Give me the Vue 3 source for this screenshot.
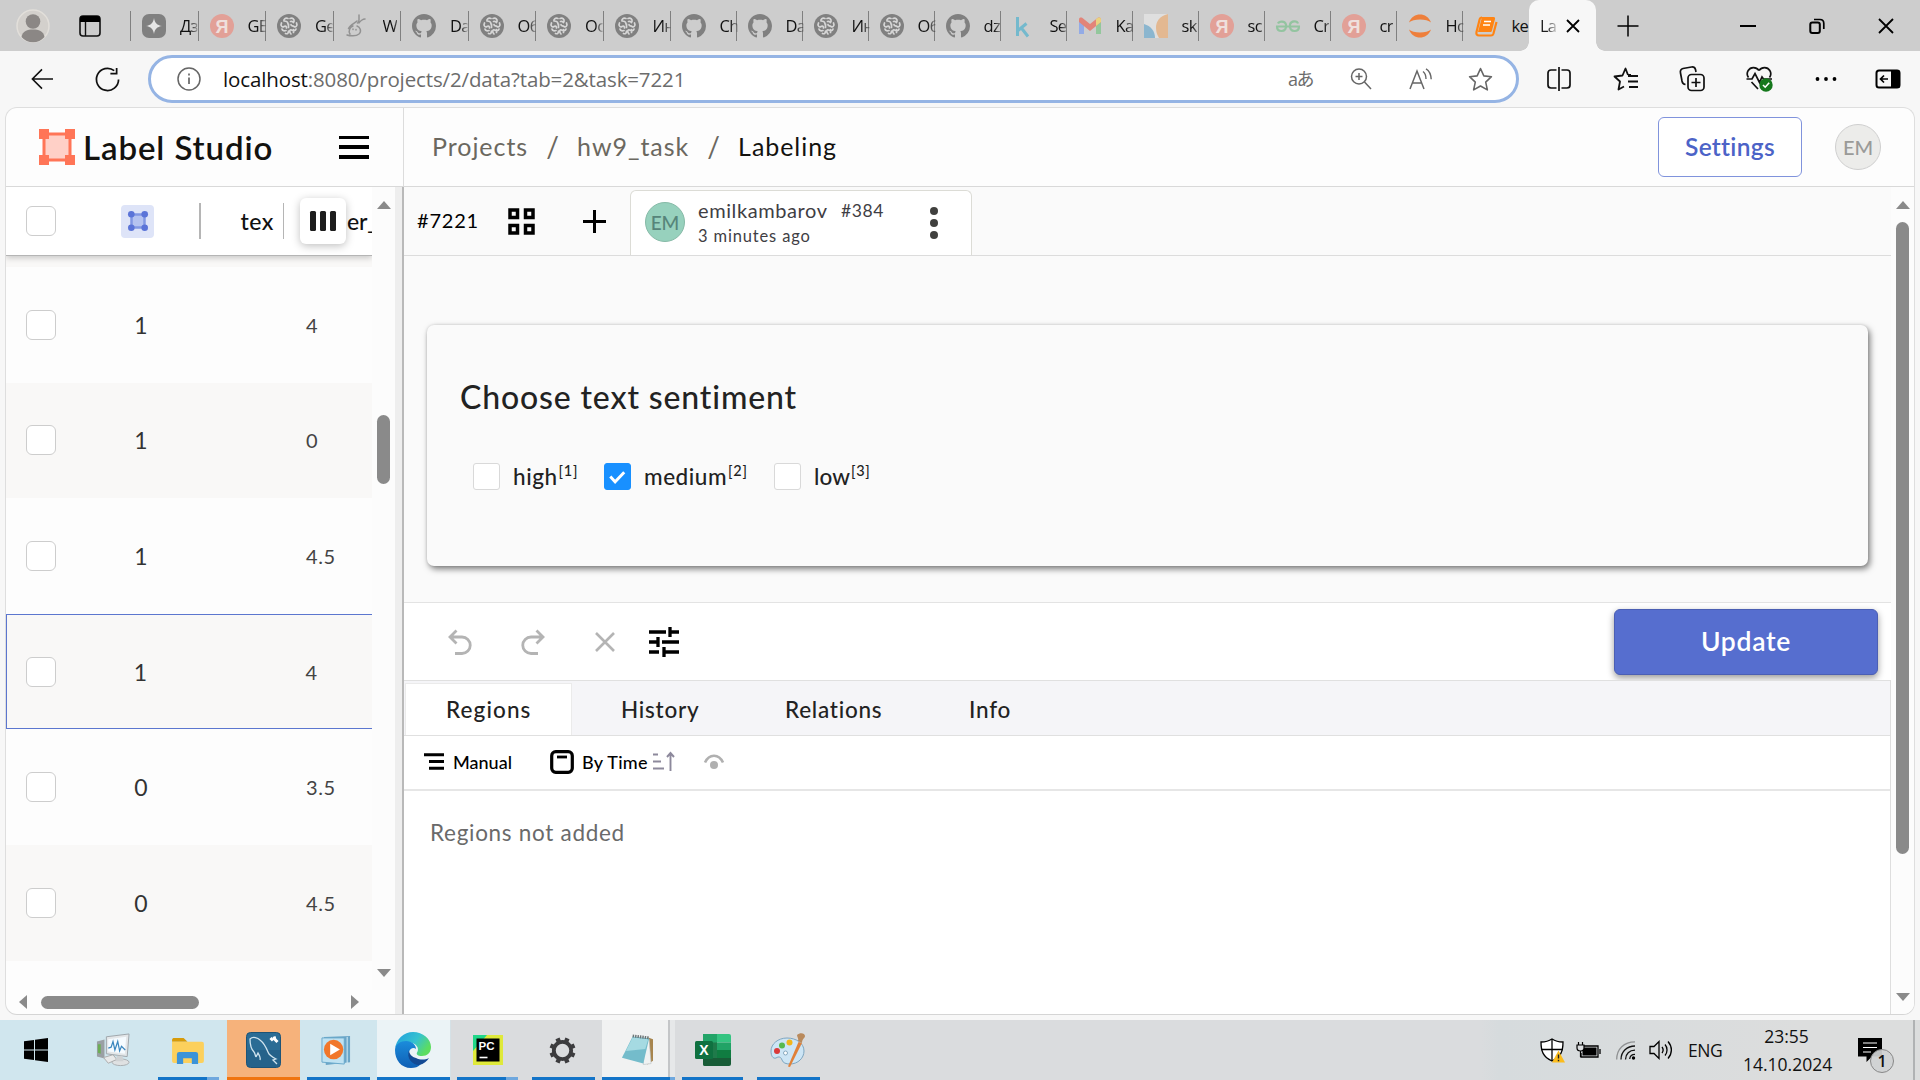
<script setup>
const gpt = '<circle cx="12" cy="12" r="12" fill="#808080"/><g fill="none" stroke="#d6d6d6" stroke-width="1.7" stroke-linecap="round"><path d="M11 4.5c-3-1-4.5 1-4 2.5 2 0 4 .5 4 3M4.5 9c-1.5 3 1 4.5 2.500 3.500 1.500-1 2.500 0 2.500 1.500M5 15c.5 2 2.500 2 4 1.500M8.500 19.500c2 .8 3-.5 3-2.500M11.500 10v3.500"/><path d="M13 4.500c3-1 4.500 1 4 3M19.500 9c1.500 3-1 4.500-2.500 3.500-1.500-1-3 0-3-2M19 15c-.5 2-2.500 2-4.500 1s-2.500 2-.5 4M16.500 15.500v3M13.500 7.500c1.500-.5 2.500 0 3 1"/></g>'
const github = '<path transform="scale(1.5)" fill="#808080" d="M8 0C3.580 0 0 3.580 0 8c0 3.540 2.290 6.530 5.470 7.590.4.07.55-.17.55-.38 0-.19-.01-.82-.01-1.490-2.010.37-2.530-.49-2.690-.94-.09-.23-.48-.94-.82-1.130-.28-.15-.68-.52-.01-.53.63-.01 1.080.58 1.230.82.72 1.210 1.870.87 2.330.66.07-.52.28-.87.51-1.070-1.780-.2-3.640-.89-3.640-3.950 0-.87.31-1.590.82-2.150-.08-.2-.36-1.020.08-2.120 0 0 .67-.21 2.200.82.64-.18 1.320-.27 2-.27.68 0 1.360.09 2 .27 1.530-1.040 2.200-.82 2.200-.82.44 1.100.16 1.920.08 2.120.51.56.82 1.270.82 2.150 0 3.070-1.870 3.750-3.650 3.950.29.25.54.73.54 1.480 0 1.070-.01 1.930-.01 2.200 0 .21.15.46.55.38A8.012 8.012 0 0 0 16 8c0-4.420-3.580-8-8-8z"/>'
const yandex = '<circle cx="12" cy="12" r="12" fill="#e2a097"/><text x="12" y="18.500" text-anchor="middle" font-family="Liberation Sans, sans-serif" font-size="18" font-weight="700" fill="#efe0dd">Я</text>'
const spark = '<rect width="24" height="24" rx="7" fill="#808080"/><path d="M12 4c.8 5 3 7.200 8 8-5 .8-7.200 3-8 8-.8-5-3-7.200-8-8 5-.8 7.200-3 8-8z" fill="#e6e6e6"/>'
const creature = '<g fill="none" stroke="#929292" stroke-width="1.500" stroke-linecap="round"><path d="M12 7c-2 2-7 4-8.500 7.500M14 1v5c0 2-1.500 3-1.500 3M20 5c-2 0-5 2-6 4M2 21c3 1 9 1.500 12-1 3-3 1-7-2-8M5 20c-2-3 0-7 3-8M8 15v.5M11 15.500v.5"/></g>'
const kaggle = '<path d="M5.500 3v19M14.500 9.500l-8.500 7M9 13.500l7 9" fill="none" stroke="#74b9cd" stroke-width="3"/>'
const gmail = '<path d="M1 6v14h5V10z" fill="#93abe6"/><path d="M23 6v14h-5V10z" fill="#93c79c"/><path d="M1 5.500C1 3.500 3 3 4.500 4L12 10l7.500-6c1.500-1 3.500-.5 3.500 1.500V8l-11 9L1 8z" fill="#e28479"/><path d="M18 5.300L19.500 4c1.500-1 3.500-.5 3.500 1.500V8l-5 4z" fill="#ead27f"/>'
const pieces = '<rect width="24" height="24" fill="#dfdfdf"/><path d="M0 10c7 2 11 7 11 14H0z" fill="#8bb6cf"/><path d="M24 0c-9 2-12 8-12 14 0 5 2 8 3 10h9z" fill="#e3b891"/>'
const geeks = '<g fill="none" stroke="#93c4a0" stroke-width="2.200"><path d="M0 12.500h24M2 9.500C3 7 9 6.500 10 10.500c1 4-1.500 6.500-4.500 6.500S1 15 1 12.500M22 9.500C21 6.500 15 6.500 14 10.500c-1 4 1.500 6.500 4.500 6.500s4.500-2 4.500-4.500"/></g>'
const jupyter = '<path d="M1 8.500C3 3 7.500.5 12 .5S21 3 23 8.500C19 4.500 5 4.500 1 8.500zM1 15.500c2 5.500 6.500 8 11 8s9-2.500 11-8c-4 4-18 4-22 0z" fill="#ee7f3b"/>'
const book = '<path d="M8 3h11.500c1.300 0 1.800.8 1.500 2l-3 11.500c-.3 1-.8 1.500-2 1.500H4z" fill="#ff8413"/><path d="M8 3.500C6.500 3.500 6 4 5.600 5.500L2.500 18c-.5 2.500.5 3.500 2.500 3.500h12c1.200 0 2-.5 2.400-1.800L22.500 8" fill="none" stroke="#ff8413" stroke-width="2.200"/><path d="M10 7.500h7M9 11h7" stroke="#fff" stroke-width="1.500"/>'

const tabs = [
  ['Дз', spark], ['GE', yandex], ['Ge', gpt], ['W', creature], ['Da', github], ['Об', gpt], ['Oc', gpt],
  ['Ин', gpt], ['Ch', github], ['Da', github], ['Ин', gpt], ['Об', gpt], ['dz', github], ['Se', kaggle],
  ['Ka', gmail], ['sk', pieces], ['sc', yandex], ['Cr', geeks], ['cr', yandex], ['Ho', jupyter], ['ke', book],
].map(([title, icon]) => ({ title, icon }))

const rows = [
  { total: 1, score: '4' },
  { total: 1, score: '0' },
  { total: 1, score: '4.5' },
  { total: 1, score: '4', selected: true },
  { total: 0, score: '3.5' },
  { total: 0, score: '4.5' },
]

const choices = [
  { name: 'high', hint: '[1]' },
  { name: 'medium', hint: '[2]', checked: true },
  { name: 'low', hint: '[3]' },
]

const panels = ['Regions', 'History', 'Relations', 'Info']
</script>

<template>
  <div class="screen">
    <header class="tabstrip">
      <svg class="profile" viewBox="0 0 34 34"><circle cx="17" cy="17" r="16" fill="#d3d0cc" stroke="#e2dfda" stroke-width="1.500"/><circle cx="17" cy="12.500" r="7.300" fill="#8b8785"/><path d="M5.500 28c1-6 6-7.500 11.500-7.500S27.500 22 28.500 28c-3 3.500-7 5.200-11.500 5.200S8.500 31.500 5.500 28z" fill="#8b8785"/></svg>
      <svg class="workspace" viewBox="0 0 22 22"><rect x="1" y="1" width="20" height="20" rx="3" fill="none" stroke="#111" stroke-width="1.600"/><path d="M1 7V4a3 3 0 0 1 3-3h14a3 3 0 0 1 3 3v3z" fill="#000"/><path d="M6.500 7v14" stroke="#111" stroke-width="1.400"/></svg>
      <div class="tabs">
        <div v-for="(t, i) in tabs" :key="i" class="tab" :class="{ wide: i < 8, last: i === 20 }">
          <svg viewBox="0 0 24 24" v-html="t.icon"></svg>
          <span>{{ t.title }}</span>
        </div>
      </div>
      <div class="tab-active">
        <span>La</span>
        <svg viewBox="0 0 16 16"><path d="M2 2l12 12M14 2L2 14" stroke="#000" stroke-width="1.800"/></svg>
      </div>
      <svg class="newtab" viewBox="0 0 22 22"><path d="M11 .5v21M.5 11h21" stroke="#000" stroke-width="1.500"/></svg>
      <div class="winctl">
        <svg viewBox="0 0 16 16"><path d="M0 8h16" stroke="#000" stroke-width="2"/></svg>
        <svg viewBox="0 0 16 16"><rect x="1.300" y="4.500" width="9.500" height="10.500" rx="2" fill="none" stroke="#000" stroke-width="2"/><path d="M5 1.500h6c2.500 0 3.800 1.500 3.800 4V11" fill="none" stroke="#000" stroke-width="1.700"/></svg>
        <svg viewBox="0 0 16 16"><path d="M1 1l14 14M15 1L1 15" stroke="#000" stroke-width="1.800"/></svg>
      </div>
    </header>

    <nav class="addressbar">
      <svg class="back" viewBox="0 0 24 24"><path d="M24 12H1.500M12 1.500L1.500 12 12 22.500" fill="none" stroke="#111" stroke-width="1.700"/></svg>
      <svg class="reload" viewBox="0 0 26 26"><path d="M24.500 13A11.500 11.500 0 1 1 20 3.800M22.500 1v6h-6.500" fill="none" stroke="#111" stroke-width="1.800"/></svg>
      <div class="omnibox">
        <svg class="info" viewBox="0 0 24 24"><circle cx="12" cy="12" r="11" fill="none" stroke="#666" stroke-width="1.500"/><path d="M12 10.500V17M12 6.500v2" stroke="#666" stroke-width="1.700"/></svg>
        <span class="url"><b>localhost</b>:8080/projects/2/data?tab=2&amp;task=7221</span>
        <span class="translate">aあ</span>
        <svg class="zoomin" viewBox="0 0 22 22"><circle cx="9" cy="8.500" r="7.500" fill="none" stroke="#666" stroke-width="1.500"/><path d="M9 5v7M5.500 8.500h7M14.500 14l6.500 7" stroke="#666" stroke-width="1.500"/></svg>
        <svg class="read" viewBox="0 0 24 22"><path d="M1 21L8 3l7 18M3.500 15h9" fill="none" stroke="#666" stroke-width="1.500"/><path d="M14 3.500c2 1.500 3 4 3 7.500M17 .8c3.500 2 5 6 5.200 10.500" fill="none" stroke="#666" stroke-width="1.400"/></svg>
        <svg class="star" viewBox="0 0 24 24"><path d="M12 1.500l3.200 7 7.300.8-5.500 5.200 1.600 7.500-6.600-3.800L5.400 22 7 14.500 1.500 9.300l7.300-.8z" fill="none" stroke="#666" stroke-width="1.500" stroke-linejoin="round"/></svg>
      </div>
      <div class="actions">
        <svg viewBox="0 0 26 26"><path d="M10.500 4H5a3 3 0 0 0-3 3v12a3 3 0 0 0 3 3h5.500M15.500 4H21a3 3 0 0 1 3 3v12a3 3 0 0 1-3 3h-5.500M13 1v24" fill="none" stroke="#111" stroke-width="1.700"/></svg>
        <svg viewBox="0 0 26 26"><path d="M15 9L12.500 2.500 9.500 9.500 1.500 10.500l5.500 5L5.500 23.500l5.500-3M15 9h3M15 10h10M15 15.500h10M16 21h9" fill="none" stroke="#111" stroke-width="1.800" stroke-linejoin="round"/></svg>
        <svg viewBox="0 0 26 26"><path d="M6.500 18.500C3.500 18 3.500 17 3 15L1.500 7c-.5-2.500.5-4 2.500-4.500L12.500 1c2-.3 3.500.7 4 2.500L17 6" fill="none" stroke="#111" stroke-width="1.700"/><rect x="9" y="8.500" width="16" height="16" rx="3.500" fill="none" stroke="#111" stroke-width="1.700"/><path d="M17 12v9M12.500 16.500h9" stroke="#111" stroke-width="1.700"/></svg>
        <svg viewBox="0 0 26 26"><path d="M13 4.500C10 .5 4.500.8 2.200 4.500 1 6.500 1 9.500 2.500 11.500M13 4.500c3-4 8.500-3.700 10.800 0 1.200 2 1.200 5-.3 7M.5 13h5.500l3-5.500 4.500 9L16 11l1.500 2H26M5.500 16l6.500 7" fill="none" stroke="#111" stroke-width="1.700"/><circle cx="20" cy="19" r="6.700" fill="#15781c"/><path d="M17 19l2.200 2.200 4-4.500" fill="none" stroke="#fff" stroke-width="1.600"/></svg>
        <svg viewBox="0 0 26 26"><circle cx="4.500" cy="13" r="1.900"/><circle cx="13" cy="13" r="1.900"/><circle cx="21.500" cy="13" r="1.900"/></svg>
        <svg class="sidebar" viewBox="0 0 26 26"><rect x="1.500" y="4.500" width="23" height="17" rx="2.500" fill="none" stroke="#000" stroke-width="2"/><path d="M16 4h7a2 2 0 0 1 2 2v14a2 2 0 0 1-2 2h-7z"/><path d="M13 13H5.500M9 9.500L5.500 13 9 16.500" fill="none" stroke="#000" stroke-width="1.700"/></svg>
      </div>
    </nav>

    <main class="page">
      <div class="topbar">
        <div class="brand">
          <svg class="logo" viewBox="0 0 36 36"><rect x="5" y="5" width="26" height="26" fill="#ffd0c7" stroke="#ff7557" stroke-width="3"/><path d="M0 0h10v10H0zM26 0h10v10H26zM0 26h10v10H0zM26 26h10v10H26z" fill="#ff7557"/></svg>
          <span class="logotext">Label Studio</span>
          <span class="burger"><i></i><i></i><i></i></span>
        </div>
        <div class="crumbs">
          <span>Projects</span><em>/</em><span>hw9_task</span><em>/</em><span class="current">Labeling</span>
        </div>
        <button class="settings">Settings</button>
        <span class="avatar">EM</span>
      </div>

      <div class="workarea">
        <aside class="tasks">
          <div class="tasks-body">
            <div class="grid">
              <div class="thead">
                <i class="check"></i>
                <span class="regionicon"><svg viewBox="0 0 20 20"><rect x="3.500" y="3.500" width="13" height="13" fill="#b5c3f0" stroke="#8298e3" stroke-width="2.500"/><g fill="#5b74d8"><circle cx="3.300" cy="3.300" r="3.300"/><circle cx="16.700" cy="3.300" r="3.300"/><circle cx="3.300" cy="16.700" r="3.300"/><circle cx="16.700" cy="16.700" r="3.300"/></g></svg></span>
                <i class="colsep s1"></i>
                <span class="tex">tex</span>
                <i class="colsep s2"></i>
                <span class="columns"><i></i><i></i><i></i></span>
                <span class="er">er_</span>
              </div>
              <div class="sliver"></div>
              <div v-for="(r, i) in rows" :key="i" class="row" :class="{ odd: i % 2 === 1, selected: r.selected }">
                <i class="check"></i><span class="total">{{ r.total }}</span><span class="score">{{ r.score }}</span>
              </div>
            </div>
            <div class="vscroll"><i class="up"></i><i class="thumb"></i><i class="down"></i></div>
          </div>
          <div class="hscroll"><i class="left"></i><i class="thumb"></i><i class="right"></i></div>
        </aside>
        <div class="splitter"></div>

        <section class="editor">
          <div class="annobar">
            <span class="tid">#7221</span>
            <svg class="gridicon" viewBox="0 0 27 27"><path d="M2 2h7.500v7.500H2zM17.500 2H25v7.500h-7.500zM2 17.500h7.500V25H2zM17.500 17.500H25V25h-7.500z" fill="none" stroke="#000" stroke-width="3.500"/></svg>
            <svg class="plus" viewBox="0 0 23 23"><path d="M11.500 0v23M0 11.500h23" stroke="#000" stroke-width="3"/></svg>
            <div class="annotation">
              <span class="who">EM</span>
              <div class="meta">
                <div class="line1"><span class="user">emilkambarov</span><span class="uid">#384</span></div>
                <div class="line2">3 minutes ago</div>
              </div>
              <span class="dots"><i></i><i></i><i></i></span>
            </div>
          </div>

          <div class="canvas">
            <div class="question">
              <h1>Choose text sentiment</h1>
              <div class="choices">
                <label v-for="(c, i) in choices" :key="c.name" :class="'choice k' + i">
                  <span class="box" :class="{ on: c.checked }"><svg v-if="c.checked" viewBox="0 0 26 26"><path d="M5.500 13l5 5.500 9.500-10" fill="none" stroke="#fff" stroke-width="3"/></svg></span>
                  <span class="name">{{ c.name }}</span><sup>{{ c.hint }}</sup>
                </label>
              </div>
            </div>
          </div>

          <div class="controls">
            <svg class="undo" viewBox="0 0 24 26"><path d="M8.500 1.500L2 8l6.500 6.500M2.500 8H14a8 8 0 0 1 0 16.500H7" fill="none" stroke="#b4b4b4" stroke-width="2.800"/></svg>
            <svg class="redo" viewBox="0 0 24 26"><path d="M15.500 1.500L22 8l-6.500 6.500M21.500 8H10a8 8 0 0 0 0 16.500h7" fill="none" stroke="#b4b4b4" stroke-width="2.800"/></svg>
            <svg class="reset" viewBox="0 0 20 20"><path d="M1 1l18 18M19 1L1 19" stroke="#b4b4b4" stroke-width="2.600"/></svg>
            <svg class="sliders" viewBox="0 0 30 30"><path d="M0 5h17M22 5h8M21 0v10M0 15h8M13 15h17M9 10v10M0 25h10M15 25h15M15 20v10" stroke="#000" stroke-width="3.300"/></svg>
            <button class="submit">Update</button>
          </div>

          <div class="panel">
            <div class="ptabs">
              <div v-for="(p, i) in panels" :key="p" class="ptab" :class="['t' + i, { active: i === 0 }]">{{ p }}</div>
            </div>
            <div class="filters">
              <svg class="group" viewBox="0 0 20 17"><path d="M0 1.700h20M5 8.500h15M5 15.300h15" stroke="#000" stroke-width="3"/></svg>
              <span class="manual">Manual</span>
              <svg class="order" viewBox="0 0 24 24"><rect x="1.700" y="1.700" width="20.600" height="20.600" rx="4" fill="none" stroke="#000" stroke-width="3.200"/><path d="M7 7h10" stroke="#000" stroke-width="2.800"/></svg>
              <span class="bytime">By Time</span>
              <svg class="sort" viewBox="0 0 22 19"><path d="M0 2.500h5M0 9.500h8M0 16.500h11" stroke="#8d899c" stroke-width="1.900"/><path d="M17.500 19V1.500M14 5l3.500-4L21 5" fill="none" stroke="#8d899c" stroke-width="1.900"/></svg>
              <svg class="eye" viewBox="0 0 20 16"><path d="M1 8.500C3 4 6 1.700 10 1.700S17 4 19 8.500" fill="none" stroke="#b0b0b0" stroke-width="2.600"/><circle cx="10" cy="11" r="4" fill="#b0b0b0"/></svg>
            </div>
            <div class="nothing">Regions not added</div>
          </div>
        </section>
        <div class="vscroll main"><i class="up"></i><i class="thumb"></i><i class="down"></i></div>
      </div>
    </main>

    <footer class="taskbar">
      <span class="task start"><svg viewBox="0 0 24 24"><path d="M0 3.300L10 2v9.500H0zM11 1.800L24 0v11.500H11zM0 12.500h10V22L0 20.700zM11 12.500h13V24l-13-1.800z"/></svg></span>
      <span class="task monitor"><svg viewBox="0 0 36 36"><path d="M1 9l8-2v20l-8-2z" fill="#9aa0a4"/><path d="M2 12l3 0v10l-3-1z" fill="#6cae55"/><path d="M11 4l24-3-2 24-22-3z" fill="#e3e6e8" stroke="#9ca4a9"/><path d="M13 6.500l19-2.500-1.500 18L13 19.500z" fill="#f5fbff"/><path d="M13 16l3-1 2-6 2 9 3-9 2 10 2-5 4 4" fill="none" stroke="#3a86be" stroke-width="1.300"/><ellipse cx="26" cy="31" rx="9" ry="3.500" fill="#dfe1e2" stroke="#a9adb0"/><path d="M8 26l10-3 4 5-9 4z" fill="#e9eaea" stroke="#aaa"/><path d="M22 24h6l1 6h-8z" fill="#cfd2d4"/></svg></span>
      <span class="task explorer more"><svg viewBox="0 0 34 28"><path d="M1 3c0-1.500 1-2 2-2h10l4 4H1z" fill="#d79b0a"/><path d="M1 5h31a2 2 0 0 1 2 2v18a2 2 0 0 1-2 2H3a2 2 0 0 1-2-2z" fill="#fcd05c"/><path d="M6 28V18a2.500 2.500 0 0 1 2.500-2.500h17A2.500 2.500 0 0 1 28 18v10h-6.500v-6h-9v6z" fill="#3c93d8"/></svg><u></u></span>
      <span class="task mysql"><svg viewBox="0 0 35 36"><rect x=".5" y=".5" width="34" height="35" rx="4" fill="#2a6c95" stroke="#1e5375"/><path d="M.5 18h34v13a4 4 0 0 1-4 4h-26a4 4 0 0 1-4-4z" fill="#1f587f" opacity=".5"/><path d="M10 25c-1-2-1-4-2-5-3-3-4-9-4-13 3-3 8-1 10 1 4 3 6 7 8 12 1 3 4 5 8 7l-3 1 4 4M10 25l2-4c1 2 3 4 2 7" fill="none" stroke="#cfe3ee" stroke-width="1.300"/><path d="M24.500 6l2.500 2.500M28 4.500l1 3 2.500 2.500" fill="none" stroke="#fff" stroke-width="3"/></svg><u></u></span>
      <span class="task media"><svg viewBox="0 0 32 32"><path d="M3 2l27-1v27l-25 3z" fill="#6ba6c8"/><path d="M1 3h23v27l-23-2z" fill="#bfe2f2" stroke="#6aa9cb"/><path d="M27 2v27" stroke="#d8eef8"/><circle cx="13" cy="15" r="10" fill="#f1772b"/><path d="M9.500 9l10 6-10 6z" fill="#fff"/></svg><u></u></span>
      <span class="task edge"><svg viewBox="0 0 36 36"><defs><linearGradient id="eg" x1="0" y1="0" x2="1" y2=".5"><stop offset="0" stop-color="#1f9de0"/><stop offset=".6" stop-color="#35c2d0"/><stop offset="1" stop-color="#5cdd5f"/></linearGradient><linearGradient id="eb" x1="0" y1="0" x2="0" y2="1"><stop offset="0" stop-color="#1b8cdb"/><stop offset="1" stop-color="#0f5fb5"/></linearGradient></defs><path d="M0 17C1 7 9 0 18 0c10 0 18 7 18 15 0 6-4 9-9 9-4 0-6-1.500-5-3.500 3-4-1-10-8-10S1 12 0 17z" fill="url(#eg)"/><path d="M0 18c0-6 6-9 11-9 6 0 10 4 10 8-2-2-6-1-7 3-1 6 4 12 12 12-3 3-6 4-10 4C6 36 0 28 0 18z" fill="url(#eb)"/><path d="M14 18c-3 8 3 15 10 15 5-1 8-4 10-7-4 2-9 2-13 0-4-1-7-4-7-8z" fill="#134a94"/></svg><u></u></span>
      <span class="task pycharm more"><svg viewBox="0 0 30 30"><rect width="30" height="30" fill="#dfe93a"/><path d="M0 0h14L0 16z" fill="#21d789"/><rect x="3.500" y="3.500" width="23" height="23" fill="#000"/><text x="5.500" y="15" font-family="Liberation Sans, sans-serif" font-size="11.500" font-weight="700" fill="#fff">PC</text><path d="M6.500 22.500h8" stroke="#fff" stroke-width="1.600"/></svg><u></u></span>
      <span class="task gear"><svg viewBox="0 0 28 28"><circle cx="14" cy="14" r="9" fill="none" stroke="#3c3c3e" stroke-width="4"/><g stroke="#3c3c3e" stroke-width="4.600"><path v-for="a in 8" :key="a" d="M14 .5v4.500" :transform="`rotate(${a * 45 - 22.5} 14 14)`"/></g></svg><u></u></span>
      <span class="task notepad"><svg viewBox="0 0 34 32"><path d="M28 3l5 2v22l-6 4z" fill="#a7854e"/><path d="M25 4l4 1 2 25-8 1z" fill="#f0f2f2" stroke="#b9c0c2" stroke-width=".6"/><path d="M12 2l17 2-6 26L1 24z" fill="#74bccb"/><path d="M12 3l16 2-3 10L5 17z" fill="#a5dae2"/><path d="M12 1.500l17 2" stroke="#6c7577" stroke-width="3" stroke-dasharray="1.500 1"/></svg><u></u></span>
      <span class="task excel"><svg viewBox="0 0 36 32"><path d="M8 2a2 2 0 0 1 2-2h12v32H10a2 2 0 0 1-2-2z" fill="#1f7a4a"/><path d="M8 0h14v8.500H8z" fill="#22a468"/><path d="M22 0h12a2 2 0 0 1 2 2v6.500H22z" fill="#34c481"/><path d="M22 8.500h14V16H22z" fill="#21a366"/><path d="M22 16h14v8H22z" fill="#107c41"/><path d="M8 24h28v6a2 2 0 0 1-2 2H10a2 2 0 0 1-2-2z" fill="#185c37"/><rect y="7" width="18" height="18" rx="1.500" fill="#0f7140"/><text x="9" y="21" text-anchor="middle" font-family="Liberation Sans, sans-serif" font-size="14" font-weight="700" fill="#fff">X</text></svg><u></u></span>
      <span class="task paint"><svg viewBox="0 0 36 34"><path d="M17 5C8 5 1 11 1 18c0 5 2 8 5 7 3-2 5-1 6 2 1 3 4 4 8 4 8 0 14-6 14-13 0-8-8-13-17-13z" fill="#cde5f5" stroke="#7ea6c0"/><circle cx="7" cy="18" r="3" fill="#da3a3a"/><circle cx="12" cy="12.500" r="3" fill="#57b94d"/><circle cx="19.500" cy="9.500" r="3" fill="#f2b51b"/><circle cx="15.500" cy="20" r="2" fill="#fff" stroke="#86a8be"/><path d="M28.500 9l3.500 1-12 24-2-.5z" fill="#e0813a"/><path d="M27 2c3-3 8-2 8 1 0 2-3 3-3 7l-4-2c1-2-1-4-1-6z" fill="#b98a5c"/></svg><u></u></span>
      <div class="tray">
        <svg class="shield" viewBox="0 0 25 25"><path d="M12 1c3 2 7 3 11 3 0 9-2 15-11 19C3 19 1 13 1 4c4 0 8-1 11-3z" fill="#fff" stroke="#000" stroke-width="1.300"/><path d="M12 1v22M1 11.500h22" stroke="#000" stroke-width="1.300"/><path d="M18.500 12.500L25 24.500H12z" fill="#fbbc1d"/><path d="M18.500 16.500v4M18.500 21.800v1.400" stroke="#222" stroke-width="1.400"/></svg>
        <svg class="battery" viewBox="0 0 25 16"><path d="M7 4h15v11H5v-4M24 7v5" fill="none" stroke="#000" stroke-width="1.300"/><path d="M8 5.500h12.500v8H6.500v-4z"/><path d="M1 3h7v3c0 2-1.500 3-3.500 3S1 8 1 6zM2.500 0v3M6.500 0v3M4.500 9v6" fill="#dadcde" stroke="#000" stroke-width="1.200"/></svg>
        <svg class="wifi" viewBox="0 0 20 19"><g fill="none"><path d="M.7 18.500C.7 8 8 .8 19 .8" stroke="#8f9193" stroke-width="1.300"/><path d="M5 18.500C5 10.500 11 5 19 5M9.500 18.500c0-5.500 4-9.300 9.500-9.300M13.700 18c.3-3 2.300-4.700 5.300-4.700" stroke="#111" stroke-width="1.300"/></g><circle cx="17.500" cy="17" r="1.700"/></svg>
        <svg class="volume" viewBox="0 0 24 20"><path d="M1 6.500h4l5-5v17l-5-5H1z" fill="none" stroke="#000" stroke-width="1.300"/><path d="M13 7c1.300 1.700 1.300 4.300 0 6M16 4.500c2.700 3 2.700 8 0 11M19 1.500c4.500 5 4.500 12 0 17" fill="none" stroke="#000" stroke-width="1.300"/></svg>
        <span class="eng">ENG</span>
        <span class="clock"><span>23:55</span><span>14.10.2024</span></span>
        <span class="notice"><svg viewBox="0 0 24 24"><path d="M0 0h24v18.500H14L8.500 24v-5.500H0z"/><path d="M5 5h14M5 9.500h14M5 14h8" stroke="#fff" stroke-width="1.200"/></svg><b>1</b></span>
      </div>
    </footer>
  </div>
</template>

<style>
html, body { margin: 0; background: #f7f7f7; overflow: hidden; }
</style>

<style scoped>
* { box-sizing: border-box; }
svg { display: block; flex: none; overflow: visible; }
i, em, b { font-style: normal; font-weight: inherit; }
.screen { width: 1920px; height: 1080px; display: flex; flex-direction: column; background: #f7f7f7; font-family: Lato, sans-serif; font-variant-ligatures: none; color: #1f1f1f; overflow: hidden; white-space: nowrap; }

.tabstrip { height: 51px; flex: none; display: flex; align-items: center; background: #cdcdcd; font-family: "Open Sans", sans-serif; }
.profile { width: 34px; height: 34px; margin-left: 16px; }
.workspace { width: 22px; height: 22px; margin-left: 29px; }
.tabs { display: flex; margin-left: 29px; border-left: 1.500px solid #808080; height: 30px; }
.tab { width: 66px; height: 30px; display: flex; align-items: center; border-right: 1.500px solid #808080; padding-left: 10.500px; }
.tab.wide { width: 67.500px; padding-left: 11px; }
.tab.last { border-right: 0; }
.tab svg { width: 24px; height: 24px; }
.tab span { margin-left: 14px; font-size: 16.500px; color: #111; -webkit-mask-image: linear-gradient(90deg, #000 10px, rgba(0,0,0,.3) 17px, transparent 18px); flex: none; letter-spacing: -.7px; }
.tab.last span { -webkit-mask-image: none; }
.tab-active { position: relative; width: 67px; height: 51px; background: #f7f7f7; border-radius: 10px 10px 0 0; display: flex; align-items: center; padding-left: 11px; font-size: 16.500px; flex: none; }
.tab-active::before, .tab-active::after { content: ""; position: absolute; bottom: 0; width: 9px; height: 9px; }
.tab-active::before { left: -9px; background: radial-gradient(circle at 0 0, transparent 8.500px, #f7f7f7 9px); }
.tab-active::after { right: -9px; background: radial-gradient(circle at 100% 0, transparent 8.500px, #f7f7f7 9px); }
.tab-active span { width: 16px; letter-spacing: -.8px; -webkit-mask-image: linear-gradient(90deg, #000 7px, rgba(0,0,0,.3) 15px); }
.tab-active svg { width: 16px; height: 16px; margin-left: 9px; }
.newtab { width: 22px; height: 22px; margin-left: 21px; }
.winctl { margin-left: auto; display: flex; gap: 53px; padding-right: 26px; }
.winctl svg { width: 16px; height: 16px; }

.addressbar { height: 56px; flex: none; display: flex; align-items: center; }
.back { width: 24px; height: 22px; margin-left: 30px; }
.reload { width: 25px; height: 25px; margin-left: 41px; }
.omnibox { width: 1371px; height: 48px; margin-left: 28px; border: 3px solid #95b4e4; border-radius: 24px; background: #fff; display: flex; align-items: center; font-family: "Open Sans", sans-serif; color: #6c6c6c; flex: none; }
.info { width: 24px; height: 24px; margin-left: 26px; }
.url { margin-left: 22px; font-size: 20.500px; width: 1065px; letter-spacing: -.13px; flex: none; }
.url b { color: #111; }
.translate { width: 26px; font-family: "Open Sans", "Noto Sans CJK JP", sans-serif; font-size: 18px; letter-spacing: -1.500px; line-height: 24px; flex: none; }
.zoomin { width: 22px; height: 22px; margin-left: 36px; }
.read { width: 24px; height: 22px; margin-left: 37px; }
.star { width: 25px; height: 25px; margin-left: 35px; }
.actions { display: flex; gap: 40.700px; margin-left: 27px; flex: none; }
.actions svg { width: 26px; height: 26px; }
.actions .sidebar { margin-left: -4px; }

.page { flex: none; width: 1910px; height: 908px; margin-left: 5px; background: #fdfdfd; border: 1px solid #dedede; border-bottom-color: #d5d5d5; border-radius: 12px; overflow: hidden; display: flex; flex-direction: column; }
.topbar { height: 79px; flex: none; display: flex; align-items: center; border-bottom: 1px solid #d9d9d9; }
.brand { width: 398px; height: 78px; border-right: 1px solid #dcdcdc; display: flex; align-items: center; flex: none; }
.logo { width: 36px; height: 36px; margin-left: 33px; }
.logotext { margin-left: 8px; font-size: 33px; font-weight: 600; width: 256px; color: #13120f; line-height: 36px; letter-spacing: .9px; }
.burger { width: 30px; height: 23px; display: flex; flex-direction: column; justify-content: space-between; }
.burger i { height: 3.500px; background: #000; }
.crumbs { display: flex; align-items: center; font-size: 25px; color: #6b6860; margin: -2px 0 0 28px; letter-spacing: .95px; }
.crumbs em { width: 49px; text-align: center; font-size: 28px; letter-spacing: 0; }
.crumbs .current { color: #13120f; }
.settings { margin-left: auto; width: 144px; height: 60px; border: 1.500px solid #8093dc; border-radius: 6px; background: #fff; font: 600 24.500px Lato, sans-serif; letter-spacing: .3px; color: #4c63c7; padding: 0 0 2px; font-variant-ligatures: none; }
.avatar { width: 46px; height: 46px; margin: 0 33px 0 33px; border-radius: 50%; border: 1.500px solid #cfcfcf; background: #ececea; color: #9a9a98; font-size: 20px; font-weight: 500; display: flex; align-items: center; justify-content: center; }

.workarea { flex: 1; display: flex; min-height: 0; }
.tasks { width: 389px; display: flex; flex-direction: column; flex: none; }
.tasks-body { display: flex; height: 803px; flex: none; }
.grid { width: 366px; overflow: hidden; position: relative; flex: none; }
.thead { height: 69px; background: #fff; border-bottom: 1.500px solid #b5b5b5; box-shadow: 0 2px 6px rgba(0,0,0,.2); display: flex; align-items: center; position: relative; }
.check { width: 30px; height: 30px; margin-left: 20px; border: 1.500px solid #cdcdcd; border-radius: 6px; background: #fff; flex: none; }
.regionicon { width: 33px; height: 33px; margin-left: 65px; border-radius: 4px; background: #dee4f8; display: flex; align-items: center; justify-content: center; flex: none; }
.regionicon svg { width: 20px; height: 20px; }
.colsep { width: 1.500px; height: 36px; background: #b5b5b5; flex: none; }
.s1 { margin-left: 45px; }
.tex, .er { font-size: 23px; font-weight: 500; color: #111; line-height: 28px; flex: none; letter-spacing: .5px; }
.tex { margin-left: 40px; width: 42px; }
.columns { width: 46px; height: 46px; margin-left: 16px; border-radius: 6px; background: #fff; box-shadow: 0 2px 8px rgba(0,0,0,.25); display: flex; align-items: center; justify-content: center; gap: 4px; flex: none; }
.columns i { width: 6px; height: 20px; border-radius: 1.500px; background: #1d1d1d; }
.er { margin-left: 1px; letter-spacing: -.2px; }
.sliver { height: 11px; background: #f9f8f7; }
.row { height: 115.600px; display: flex; align-items: center; }
.row.odd { background: #f9f8f7; }
.row.selected { border: 1.500px solid #5c76cf; border-right: 0; }
.row.selected .check { margin-left: 18.500px; }
.total { width: 40px; margin-left: 65px; text-align: center; font-size: 23px; color: #333; }
.score { margin-left: 145px; font-size: 20px; color: #444; letter-spacing: .6px; }
.vscroll { width: 23px; display: flex; flex-direction: column; align-items: center; background: #fcfcfc; flex: none; }
.up, .down { border: 7.500px solid transparent; border-top-width: 0; border-bottom: 8px solid #8a8a8a; margin-top: 14px; }
.down { border-bottom-width: 0; border-top: 8px solid #8a8a8a; margin: auto 0 13px; }
.vscroll .thumb { width: 13px; height: 69px; margin-top: 206px; border-radius: 7px; background: #8a8a8a; }
.hscroll { display: flex; align-items: center; height: 25px; }
.left, .right { border: 7.500px solid transparent; border-left-width: 0; border-right: 8px solid #8a8a8a; margin-left: 13px; }
.right { border-right-width: 0; border-left: 8px solid #8a8a8a; margin-left: 152px; }
.hscroll .thumb { width: 158px; height: 13px; margin-left: 14px; border-radius: 7px; background: #8a8a8a; }
.splitter { width: 9px; background: #eee; border-right: 2px solid #b9b9b9; flex: none; }

.editor { width: 1487px; display: flex; flex-direction: column; background: #fff; flex: none; }
.annobar { height: 69px; background: #fafafa; border-bottom: 1px solid #dcdcdc; display: flex; align-items: center; flex: none; }
.tid { margin: -2px 0 0 13px; width: 91px; font-size: 20px; color: #000; letter-spacing: .8px; }
.gridicon { width: 27px; height: 27px; }
.plus { width: 23px; height: 23px; margin-left: 48px; }
.annotation { width: 342px; height: 65px; margin: 3px 0 0 24px; background: #fff; border: 1.500px solid #dcdcd6; border-bottom: 0; border-radius: 6px 6px 0 0; display: flex; align-items: center; }
.who { width: 40px; height: 40px; margin: -2px 0 0 14px; border-radius: 50%; background: #97d1bd; border: 1.500px solid #86baa7; color: #56857a; font-size: 19px; font-weight: 500; display: flex; align-items: center; justify-content: center; flex: none; }
.meta { margin-left: 13px; width: 232px; color: #3f3e44; flex: none; }
.line1 { display: flex; align-items: center; font-size: 20px; line-height: 25px; letter-spacing: .6px; }
.line2 { font-size: 16.500px; line-height: 26px; letter-spacing: .85px; }
.user { width: 143px; }
.uid { font-size: 17.500px; }
.dots { display: flex; flex-direction: column; gap: 4px; }
.dots i { width: 8px; height: 8px; border-radius: 50%; background: #40403e; }

.canvas { height: 346px; background: #fafafa; padding: 69px 0 0 23px; flex: none; }
.question { width: 1441px; height: 241px; border-radius: 7px; background: #fafafa; box-shadow: 2px 3px 6px rgba(0,0,0,.5), 0 0 3px rgba(0,0,0,.12); padding: 52px 0 0 33px; }
h1 { margin: 0; font-size: 32px; font-weight: 500; line-height: 40px; color: #222; letter-spacing: .85px; }
.choices { display: flex; margin: 42px 0 0 13px; height: 34px; align-items: center; }
.choice { display: flex; align-items: center; font-size: 22.500px; font-weight: 500; color: #222; }
.name { letter-spacing: .55px; }
.k0 { width: 131px; } .k1 { width: 170px; } .k2 .name { letter-spacing: .1px; }
.box { width: 27px; height: 27px; margin-right: 13px; border: 1px solid #d9d9d9; border-radius: 3px; background: #fff; flex: none; }
.box.on { background: #1890ff; border-color: #1890ff; }
.box svg { width: 25px; height: 25px; }
.choice sup { font-size: 14.500px; line-height: 16px; vertical-align: baseline; margin: 0 0 10px 1px; letter-spacing: .7px; }

.controls { height: 78px; border-top: 1px solid #e3e3e3; display: flex; align-items: center; padding-right: 13px; flex: none; }
.undo, .redo { width: 24px; height: 26px; margin-left: 44px; }
.redo { margin-left: 49px; }
.reset { width: 20px; height: 20px; margin-left: 50px; }
.sliders { width: 30px; height: 30px; margin-left: 34px; }
.submit { margin-left: auto; width: 264px; height: 66px; border: 1.500px solid #4b5fb4; border-radius: 6px; background: #566ecf; color: #fff; font: 600 26.500px Lato, sans-serif; letter-spacing: .7px; box-shadow: 0 3px 7px rgba(0,0,0,.4); padding: 0 0 2px; }

.panel { flex: 1; border-right: 1px solid #dedede; min-height: 0; }
.ptabs { height: 56px; border-top: 1px solid #e0e0e0; border-bottom: 1px solid #e0e0e0; background: #f5f5f8; display: flex; align-items: flex-end; font-size: 22.500px; font-weight: 500; color: #222; letter-spacing: .75px; }
.ptab { height: 52px; line-height: 53px; }
.ptab.active { background: #fff; width: 167px; margin-left: 1px; padding-left: 40px; border: 1px solid #ebebeb; border-bottom: 0; letter-spacing: 1.100px; line-height: 51px; }
.t1 { margin-left: 49px; width: 164px; } .t2 { width: 184px; }
.filters { height: 55px; border-bottom: 2px solid #e6e6e6; display: flex; align-items: center; font-size: 18px; font-weight: 500; color: #000; padding-bottom: 2px; }
.group { width: 20px; height: 17px; margin-left: 20px; }
.manual { margin-left: 9px; width: 97px; }
.order { width: 24px; height: 24px; }
.bytime { margin-left: 8px; width: 71px; letter-spacing: .3px; }
.sort { width: 22px; height: 19px; }
.eye { width: 20px; height: 16px; margin-left: 29px; }
.nothing { padding: 26px 0 0 26px; font-size: 22.500px; color: #6a6a6a; line-height: 32px; letter-spacing: .7px; }
.vscroll.main { width: 23px; }
.vscroll.main .thumb { height: 632px; margin-top: 13px; }

.taskbar { height: 60px; margin-top: auto; display: flex; flex: none; background: linear-gradient(90deg, #d0e6ee 0, #d0e6ee 450px, #dadcde 451px, #dadcde 1480px, #d6dbdd 1500px, #dcdddd 1800px); font-family: "Open Sans", sans-serif; color: #111; }
.task { position: relative; display: flex; align-items: center; justify-content: center; width: 75px; height: 60px; flex: none; }
.task u { position: absolute; left: 7px; right: 7px; bottom: 0; height: 3px; background: #1374c8; }
.start svg { width: 24px; height: 24px; }
.start { width: 72px; }
.monitor { width: 82px; } .monitor svg { width: 34px; height: 34px; }
.explorer { width: 73px; } .explorer svg { width: 33px; height: 27px; margin-left: -6px; }
.task.explorer u { left: 4px; right: 8px; } .task.more u { background: linear-gradient(90deg, #1374c8 80%, #6fa8de 80%); }
.mysql { width: 73px; background: #f6b27b; } .mysql svg { width: 35px; height: 36px; }
.task.mysql u { left: 0; right: 0; background: #f0740f; }
.media { width: 77px; } .media svg { width: 31px; height: 31px; margin-left: -4px; }
.edge { width: 73px; background: #ebf3f6; } .edge svg { width: 36px; height: 36px; margin-left: -2px; }
.task.edge u { left: 0; right: 0; }
.pycharm svg { width: 30px; height: 30px; }
.gear { width: 77px; } .gear svg { width: 27px; height: 27px; margin-left: -2px; }
.notepad { width: 73px; background: linear-gradient(90deg, #f1f2f2 66px, #c4c6c8 66px, #c4c6c8 68px, #e6e8e9 68px); } .notepad svg { width: 33px; height: 32px; margin-left: -3px; }
.task.notepad u { left: 0; right: 0; background: linear-gradient(90deg, #1374c8 68px, #6fa8de 68px); }
.excel svg { width: 36px; height: 32px; }
.paint { width: 77px; } .paint svg { width: 36px; height: 34px; margin-left: -2px; }
.tray { margin-left: auto; display: flex; align-items: center; padding-right: 31px; margin-right: 5px; border-right: 2px solid #b0b2b3; }
.shield { width: 25px; height: 25px; }
.battery { width: 25px; height: 16px; margin-left: 11px; }
.wifi { width: 20px; height: 19px; margin-left: 15px; }
.volume { width: 24px; height: 20px; margin-left: 13px; }
.eng { margin-left: 15px; font-size: 17.500px; width: 55px; letter-spacing: -.5px; }
.clock { display: flex; flex-direction: column; width: 87px; text-align: center; font-size: 17.500px; line-height: 28px; }
.notice { position: relative; margin-left: 28px; width: 24px; height: 24px; }
.notice svg { width: 24px; height: 24px; }
.notice b { position: absolute; left: 12px; top: 11px; width: 24px; height: 24px; border: 1px solid #888; border-radius: 50%; background: rgba(208,210,211,.93); font-size: 16px; font-weight: 600; line-height: 22px; text-align: center; }
</style>
